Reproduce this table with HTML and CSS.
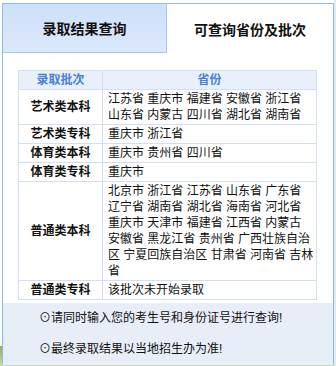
FILE: index.html
```html
<!DOCTYPE html>
<html lang="zh-CN">
<head>
<meta charset="utf-8">
<title>可查询省份及批次</title>
<link rel="stylesheet" href="styles.css">
</head>
<body>
<div class="page">
  <div class="box">
    <div class="tabs">
      <div class="tab tab-off">录取结果查询</div>
      <div class="tab tab-on">可查询省份及批次</div>
    </div>
    <div class="panel">
      <table class="grid">
        <colgroup><col class="c1"><col class="c2"></colgroup>
        <thead>
          <tr><th>录取批次</th><th>省份</th></tr>
        </thead>
        <tbody>
          <tr><td class="batch">艺术类本科</td><td class="prov">江苏省 重庆市 福建省 安徽省 浙江省 山东省 内蒙古 四川省 湖北省 湖南省</td></tr>
          <tr><td class="batch">艺术类专科</td><td class="prov">重庆市 浙江省</td></tr>
          <tr><td class="batch">体育类本科</td><td class="prov">重庆市 贵州省 四川省</td></tr>
          <tr><td class="batch">体育类专科</td><td class="prov">重庆市</td></tr>
          <tr><td class="batch">普通类本科</td><td class="prov">北京市 浙江省 江苏省 山东省 广东省 辽宁省 湖南省 湖北省 海南省 河北省 重庆市 天津市 福建省 江西省 内蒙古 安徽省 黑龙江省 贵州省 广西壮族自治区 宁夏回族自治区 甘肃省 河南省 吉林省</td></tr>
          <tr><td class="batch">普通类专科</td><td class="prov">该批次未开始录取</td></tr>
        </tbody>
      </table>
      <div class="notes">
        <p>⊙请同时输入您的考生号和身份证号进行查询!</p>
        <p>⊙最终录取结果以当地招生办为准!</p>
      </div>
    </div>
  </div>
</div>
</body>
</html>
```

FILE: styles.css
```css
html, body {
  margin: 0;
  padding: 0;
}
body {
  width: 336px;
  height: 366px;
  overflow: hidden;
  background:
    linear-gradient(to right, transparent 0, transparent 334px, #e3eaf2 334px),
    linear-gradient(to bottom, #ffffff 0, #ffffff 346px, #8fb05a 346px, #c9d8b4 366px);
  font-family: "Liberation Sans", "Noto Sans CJK SC", sans-serif;
  color: #111;
}
.page {
  padding: 3px 0 0 2px;
}
.box {
  width: 330px;
  height: 358px;
  border: 1px solid #8db9ea;
  background: #fff;
  display: flex;
  flex-direction: column;
}
.tabs {
  display: flex;
  height: 49px;
  flex: none;
}
.tab {
  display: flex;
  align-items: center;
  justify-content: center;
  font-size: 14px;
  font-weight: bold;
  color: #111;
}
.tab-off {
  width: 163px;
  height: 48px;
  border-right: 1px solid #a3c6ef;
  border-bottom: 1px solid #a3c6ef;
  background: linear-gradient(to bottom, #cde0fa, #dbe8fb);
}
.tab-on {
  flex: 1;
  height: 49px;
  background: #fff;
}
.panel {
  flex: 1;
  display: flex;
  flex-direction: column;
  padding-top: 17px;
}
.grid {
  margin-left: 15px;
  width: 298px;
  border-collapse: collapse;
  table-layout: fixed;
  font-size: 12px;
  line-height: 16px;
  background: #fff;
}
.c1 { width: 84px; }
.c2 { width: 214px; }
.grid th,
.grid td {
  border: 1px solid #d3dff0;
  padding: 1px 1px 1px 5px;
  vertical-align: middle;
}
.grid th {
  background: #e8f0fb;
  color: #4a7fd1;
  font-weight: bold;
  text-align: center;
  padding: 1px;
}
.grid td.batch {
  text-align: center;
  font-weight: bold;
  padding: 1px;
}
.grid td.prov {
  word-break: break-all;
}
.notes {
  margin-top: 3px;
  flex: 1;
  background: #e8eef7;
  padding-left: 36px;
  font-size: 12px;
  overflow: hidden;
}
.notes p {
  margin: 0;
  line-height: 31px;
}
```
